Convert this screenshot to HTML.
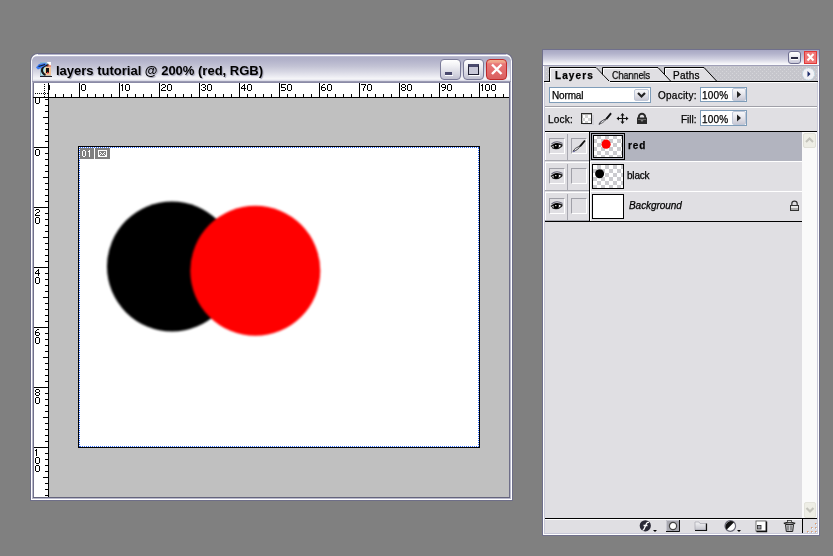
<!DOCTYPE html>
<html><head><meta charset="utf-8"><style>
html,body{margin:0;padding:0;}
body{width:833px;height:556px;background:#808080;position:relative;overflow:hidden;font-family:"Liberation Sans", sans-serif;}
div{box-sizing:border-box;}
svg{position:absolute;overflow:visible;}
.t{position:absolute;color:#000;white-space:nowrap;will-change:transform;-webkit-text-stroke:0.25px #000;}
.clip{position:absolute;overflow:hidden;}
</style></head><body>

<div style="position:absolute;left:30px;top:53px;width:483px;height:448px;background:#6e6e88;border-radius:8px 8px 0 0;"></div>
<div style="position:absolute;left:31px;top:54px;width:481px;height:446px;background:#ffffff;border-radius:7px 7px 0 0;"></div>
<div style="position:absolute;left:32px;top:56px;width:479px;height:26px;background:linear-gradient(#c4c4d8 0px,#b0b0c8 1.5px,#b2b2ca 4px,#c2c2d4 10px,#d8d8e4 16px,#eeeef4 21px,#f6f6f8 23px,#dcdce8 24.5px,#c8c8d8 25px);border-radius:5px 5px 0 0;"></div>
<div style="position:absolute;left:38px;top:54px;width:468px;height:1px;background:#b4b4cc;"></div>
<div style="position:absolute;left:32px;top:60px;width:1px;height:438px;background:#b8b8cc;"></div>
<div style="position:absolute;left:33px;top:82px;width:1px;height:416px;background:#70708a;"></div>
<div style="position:absolute;left:510px;top:60px;width:1px;height:438px;background:#b8b8cc;"></div>
<div style="position:absolute;left:509px;top:82px;width:1px;height:416px;background:#6e6e88;"></div>
<div style="position:absolute;left:32px;top:498px;width:479px;height:1px;background:#b8b8cc;"></div>
<div style="position:absolute;left:33px;top:497px;width:477px;height:1px;background:#64647c;"></div>
<div style="position:absolute;left:32px;top:81px;width:479px;height:1px;background:#9a9ab2;"></div>
<div style="position:absolute;left:33px;top:82px;width:476px;height:1px;background:#8a8aa6;"></div>
<div class="t" style="left:56px;top:63px;font-size:13px;line-height:16px;font-weight:bold;-webkit-text-stroke:0;text-shadow:1px 1px 1px #9c9cb0;">layers tutorial @ 200% (red, RGB)</div>
<svg style="left:34px;top:58px" width="22" height="22" viewBox="0 0 22 22">
<rect x="6" y="4" width="11" height="14" fill="#90b8d0"/>
<rect x="7" y="7" width="6" height="10" fill="#b0eef0"/>
<path d="M12 6 H17 V17.5 H10 Z" fill="#f0c498"/>
<path d="M14.5 7.5 A4.8 4.8 0 1 0 11.5 17" stroke="#141418" stroke-width="2.2" fill="none"/>
<rect x="12" y="10" width="3" height="5" fill="#111"/>
<rect x="13" y="14" width="1.5" height="1.5" fill="#e02828"/>
<path d="M12.5 4 H17 V8 Z" fill="#ffffff"/>
<path d="M13 8 L17 8" stroke="#e04040" stroke-width="0.8"/>
<path d="M2 9.5 L5 6 L11 5 L13 6.5 L9 9 L4 11.5 Z" fill="#3a78f0"/>
<path d="M4.5 8.5 L11 6.5" stroke="#101828" stroke-width="1.2"/>
<rect x="6" y="18" width="12" height="1" fill="#20202c"/>
</svg>
<div style="position:absolute;left:440px;top:59px;width:21px;height:21px;background:linear-gradient(#ffffff,#f0f0f4 30%,#d4d4e0 75%,#c0c0d0);border:1px solid #7a7a98;border-radius:4px;"></div>
<div style="position:absolute;left:463px;top:59px;width:21px;height:21px;background:linear-gradient(#ffffff,#f0f0f4 30%,#d4d4e0 75%,#c0c0d0);border:1px solid #7a7a98;border-radius:4px;"></div>
<div style="position:absolute;left:445px;top:72px;width:7px;height:3px;background:#4a4a6e;"></div>
<div style="position:absolute;left:445px;top:75px;width:8px;height:1px;background:#ffffff;"></div>
<div style="position:absolute;left:468px;top:64px;width:11px;height:11px;background:#c8c8d8;border:1px solid #1e1e30;border-top:3px solid #4a4a6e;"></div>
<div style="position:absolute;left:469px;top:75px;width:11px;height:1px;background:#ffffff;"></div>
<div style="position:absolute;left:486px;top:59px;width:21px;height:21px;background:linear-gradient(#f0b090 0,#f0a088 12%,#e87878 20%,#e06868 70%,#d86060);border:1px solid #c02828;border-radius:4px;"></div>
<svg style="left:486px;top:59px" width="21" height="21"><path d="M6 5.5 L15.5 15 M15.5 5.5 L6 15" stroke="#fff" stroke-width="2.4"/></svg>
<div style="position:absolute;left:33px;top:82px;width:476px;height:1px;background:#8a8aa6;"></div>
<div style="position:absolute;left:34px;top:83px;width:475px;height:14px;background:#ffffff;"></div>
<div style="position:absolute;left:34px;top:98px;width:14px;height:399px;background:#ffffff;"></div>
<div style="position:absolute;left:33px;top:97px;width:476px;height:1px;background:#000;"></div>
<div style="position:absolute;left:48px;top:83px;width:1px;height:414px;background:#000;"></div>
<div style="position:absolute;left:49px;top:98px;width:460px;height:399px;background:#c0c0c0;"></div>
<div style="position:absolute;left:55px;top:94px;width:1px;height:3px;background:#000;"></div>
<div style="position:absolute;left:63px;top:94px;width:1px;height:3px;background:#000;"></div>
<div style="position:absolute;left:71px;top:94px;width:1px;height:3px;background:#000;"></div>
<div style="position:absolute;left:79px;top:83px;width:1px;height:14px;background:#000;"></div>
<div style="position:absolute;left:87px;top:94px;width:1px;height:3px;background:#000;"></div>
<div style="position:absolute;left:95px;top:94px;width:1px;height:3px;background:#000;"></div>
<div style="position:absolute;left:103px;top:94px;width:1px;height:3px;background:#000;"></div>
<div style="position:absolute;left:111px;top:94px;width:1px;height:3px;background:#000;"></div>
<div style="position:absolute;left:119px;top:83px;width:1px;height:14px;background:#000;"></div>
<div style="position:absolute;left:127px;top:94px;width:1px;height:3px;background:#000;"></div>
<div style="position:absolute;left:135px;top:94px;width:1px;height:3px;background:#000;"></div>
<div style="position:absolute;left:143px;top:94px;width:1px;height:3px;background:#000;"></div>
<div style="position:absolute;left:151px;top:94px;width:1px;height:3px;background:#000;"></div>
<div style="position:absolute;left:159px;top:83px;width:1px;height:14px;background:#000;"></div>
<div style="position:absolute;left:167px;top:94px;width:1px;height:3px;background:#000;"></div>
<div style="position:absolute;left:175px;top:94px;width:1px;height:3px;background:#000;"></div>
<div style="position:absolute;left:183px;top:94px;width:1px;height:3px;background:#000;"></div>
<div style="position:absolute;left:191px;top:94px;width:1px;height:3px;background:#000;"></div>
<div style="position:absolute;left:199px;top:83px;width:1px;height:14px;background:#000;"></div>
<div style="position:absolute;left:207px;top:94px;width:1px;height:3px;background:#000;"></div>
<div style="position:absolute;left:215px;top:94px;width:1px;height:3px;background:#000;"></div>
<div style="position:absolute;left:223px;top:94px;width:1px;height:3px;background:#000;"></div>
<div style="position:absolute;left:231px;top:94px;width:1px;height:3px;background:#000;"></div>
<div style="position:absolute;left:239px;top:83px;width:1px;height:14px;background:#000;"></div>
<div style="position:absolute;left:247px;top:94px;width:1px;height:3px;background:#000;"></div>
<div style="position:absolute;left:255px;top:94px;width:1px;height:3px;background:#000;"></div>
<div style="position:absolute;left:263px;top:94px;width:1px;height:3px;background:#000;"></div>
<div style="position:absolute;left:271px;top:94px;width:1px;height:3px;background:#000;"></div>
<div style="position:absolute;left:279px;top:83px;width:1px;height:14px;background:#000;"></div>
<div style="position:absolute;left:287px;top:94px;width:1px;height:3px;background:#000;"></div>
<div style="position:absolute;left:295px;top:94px;width:1px;height:3px;background:#000;"></div>
<div style="position:absolute;left:303px;top:94px;width:1px;height:3px;background:#000;"></div>
<div style="position:absolute;left:311px;top:94px;width:1px;height:3px;background:#000;"></div>
<div style="position:absolute;left:319px;top:83px;width:1px;height:14px;background:#000;"></div>
<div style="position:absolute;left:327px;top:94px;width:1px;height:3px;background:#000;"></div>
<div style="position:absolute;left:335px;top:94px;width:1px;height:3px;background:#000;"></div>
<div style="position:absolute;left:343px;top:94px;width:1px;height:3px;background:#000;"></div>
<div style="position:absolute;left:351px;top:94px;width:1px;height:3px;background:#000;"></div>
<div style="position:absolute;left:359px;top:83px;width:1px;height:14px;background:#000;"></div>
<div style="position:absolute;left:367px;top:94px;width:1px;height:3px;background:#000;"></div>
<div style="position:absolute;left:375px;top:94px;width:1px;height:3px;background:#000;"></div>
<div style="position:absolute;left:383px;top:94px;width:1px;height:3px;background:#000;"></div>
<div style="position:absolute;left:391px;top:94px;width:1px;height:3px;background:#000;"></div>
<div style="position:absolute;left:399px;top:83px;width:1px;height:14px;background:#000;"></div>
<div style="position:absolute;left:407px;top:94px;width:1px;height:3px;background:#000;"></div>
<div style="position:absolute;left:415px;top:94px;width:1px;height:3px;background:#000;"></div>
<div style="position:absolute;left:423px;top:94px;width:1px;height:3px;background:#000;"></div>
<div style="position:absolute;left:431px;top:94px;width:1px;height:3px;background:#000;"></div>
<div style="position:absolute;left:439px;top:83px;width:1px;height:14px;background:#000;"></div>
<div style="position:absolute;left:447px;top:94px;width:1px;height:3px;background:#000;"></div>
<div style="position:absolute;left:455px;top:94px;width:1px;height:3px;background:#000;"></div>
<div style="position:absolute;left:463px;top:94px;width:1px;height:3px;background:#000;"></div>
<div style="position:absolute;left:471px;top:94px;width:1px;height:3px;background:#000;"></div>
<div style="position:absolute;left:479px;top:83px;width:1px;height:14px;background:#000;"></div>
<div style="position:absolute;left:487px;top:94px;width:1px;height:3px;background:#000;"></div>
<div style="position:absolute;left:495px;top:94px;width:1px;height:3px;background:#000;"></div>
<div style="position:absolute;left:503px;top:94px;width:1px;height:3px;background:#000;"></div>
<div style="position:absolute;left:45px;top:99px;width:3px;height:1px;background:#000;"></div>
<div style="position:absolute;left:45px;top:105px;width:3px;height:1px;background:#000;"></div>
<div style="position:absolute;left:45px;top:111px;width:3px;height:1px;background:#000;"></div>
<div style="position:absolute;left:43px;top:117px;width:5px;height:1px;background:#000;"></div>
<div style="position:absolute;left:45px;top:123px;width:3px;height:1px;background:#000;"></div>
<div style="position:absolute;left:45px;top:129px;width:3px;height:1px;background:#000;"></div>
<div style="position:absolute;left:45px;top:135px;width:3px;height:1px;background:#000;"></div>
<div style="position:absolute;left:45px;top:141px;width:3px;height:1px;background:#000;"></div>
<div style="position:absolute;left:34px;top:147px;width:14px;height:1px;background:#000;"></div>
<div style="position:absolute;left:45px;top:153px;width:3px;height:1px;background:#000;"></div>
<div style="position:absolute;left:45px;top:159px;width:3px;height:1px;background:#000;"></div>
<div style="position:absolute;left:45px;top:165px;width:3px;height:1px;background:#000;"></div>
<div style="position:absolute;left:45px;top:171px;width:3px;height:1px;background:#000;"></div>
<div style="position:absolute;left:43px;top:177px;width:5px;height:1px;background:#000;"></div>
<div style="position:absolute;left:45px;top:183px;width:3px;height:1px;background:#000;"></div>
<div style="position:absolute;left:45px;top:189px;width:3px;height:1px;background:#000;"></div>
<div style="position:absolute;left:45px;top:195px;width:3px;height:1px;background:#000;"></div>
<div style="position:absolute;left:45px;top:201px;width:3px;height:1px;background:#000;"></div>
<div style="position:absolute;left:34px;top:207px;width:14px;height:1px;background:#000;"></div>
<div style="position:absolute;left:45px;top:213px;width:3px;height:1px;background:#000;"></div>
<div style="position:absolute;left:45px;top:219px;width:3px;height:1px;background:#000;"></div>
<div style="position:absolute;left:45px;top:225px;width:3px;height:1px;background:#000;"></div>
<div style="position:absolute;left:45px;top:231px;width:3px;height:1px;background:#000;"></div>
<div style="position:absolute;left:43px;top:237px;width:5px;height:1px;background:#000;"></div>
<div style="position:absolute;left:45px;top:243px;width:3px;height:1px;background:#000;"></div>
<div style="position:absolute;left:45px;top:249px;width:3px;height:1px;background:#000;"></div>
<div style="position:absolute;left:45px;top:255px;width:3px;height:1px;background:#000;"></div>
<div style="position:absolute;left:45px;top:261px;width:3px;height:1px;background:#000;"></div>
<div style="position:absolute;left:34px;top:267px;width:14px;height:1px;background:#000;"></div>
<div style="position:absolute;left:45px;top:273px;width:3px;height:1px;background:#000;"></div>
<div style="position:absolute;left:45px;top:279px;width:3px;height:1px;background:#000;"></div>
<div style="position:absolute;left:45px;top:285px;width:3px;height:1px;background:#000;"></div>
<div style="position:absolute;left:45px;top:291px;width:3px;height:1px;background:#000;"></div>
<div style="position:absolute;left:43px;top:297px;width:5px;height:1px;background:#000;"></div>
<div style="position:absolute;left:45px;top:303px;width:3px;height:1px;background:#000;"></div>
<div style="position:absolute;left:45px;top:309px;width:3px;height:1px;background:#000;"></div>
<div style="position:absolute;left:45px;top:315px;width:3px;height:1px;background:#000;"></div>
<div style="position:absolute;left:45px;top:321px;width:3px;height:1px;background:#000;"></div>
<div style="position:absolute;left:34px;top:327px;width:14px;height:1px;background:#000;"></div>
<div style="position:absolute;left:45px;top:333px;width:3px;height:1px;background:#000;"></div>
<div style="position:absolute;left:45px;top:339px;width:3px;height:1px;background:#000;"></div>
<div style="position:absolute;left:45px;top:345px;width:3px;height:1px;background:#000;"></div>
<div style="position:absolute;left:45px;top:351px;width:3px;height:1px;background:#000;"></div>
<div style="position:absolute;left:43px;top:357px;width:5px;height:1px;background:#000;"></div>
<div style="position:absolute;left:45px;top:363px;width:3px;height:1px;background:#000;"></div>
<div style="position:absolute;left:45px;top:369px;width:3px;height:1px;background:#000;"></div>
<div style="position:absolute;left:45px;top:375px;width:3px;height:1px;background:#000;"></div>
<div style="position:absolute;left:45px;top:381px;width:3px;height:1px;background:#000;"></div>
<div style="position:absolute;left:34px;top:387px;width:14px;height:1px;background:#000;"></div>
<div style="position:absolute;left:45px;top:393px;width:3px;height:1px;background:#000;"></div>
<div style="position:absolute;left:45px;top:399px;width:3px;height:1px;background:#000;"></div>
<div style="position:absolute;left:45px;top:405px;width:3px;height:1px;background:#000;"></div>
<div style="position:absolute;left:45px;top:411px;width:3px;height:1px;background:#000;"></div>
<div style="position:absolute;left:43px;top:417px;width:5px;height:1px;background:#000;"></div>
<div style="position:absolute;left:45px;top:423px;width:3px;height:1px;background:#000;"></div>
<div style="position:absolute;left:45px;top:429px;width:3px;height:1px;background:#000;"></div>
<div style="position:absolute;left:45px;top:435px;width:3px;height:1px;background:#000;"></div>
<div style="position:absolute;left:45px;top:441px;width:3px;height:1px;background:#000;"></div>
<div style="position:absolute;left:34px;top:447px;width:14px;height:1px;background:#000;"></div>
<div style="position:absolute;left:45px;top:453px;width:3px;height:1px;background:#000;"></div>
<div style="position:absolute;left:45px;top:459px;width:3px;height:1px;background:#000;"></div>
<div style="position:absolute;left:45px;top:465px;width:3px;height:1px;background:#000;"></div>
<div style="position:absolute;left:45px;top:471px;width:3px;height:1px;background:#000;"></div>
<div style="position:absolute;left:43px;top:477px;width:5px;height:1px;background:#000;"></div>
<div style="position:absolute;left:45px;top:483px;width:3px;height:1px;background:#000;"></div>
<div style="position:absolute;left:45px;top:489px;width:3px;height:1px;background:#000;"></div>
<div style="position:absolute;left:45px;top:495px;width:3px;height:1px;background:#000;"></div>
<svg style="left:0;top:0" width="833" height="556" shape-rendering="crispEdges"><path fill="#000" d="M49 85h1v1h-1zM49 86h1v1h-1zM49 87h1v1h-1zM49 88h1v1h-1zM49 89h1v1h-1zM82 84h1v1h-1zM83 84h1v1h-1zM84 84h1v1h-1zM81 85h1v1h-1zM85 85h1v1h-1zM81 86h1v1h-1zM85 86h1v1h-1zM81 87h1v1h-1zM85 87h1v1h-1zM81 88h1v1h-1zM85 88h1v1h-1zM81 89h1v1h-1zM85 89h1v1h-1zM82 90h1v1h-1zM83 90h1v1h-1zM84 90h1v1h-1zM122 84h1v1h-1zM121 85h1v1h-1zM122 85h1v1h-1zM122 86h1v1h-1zM122 87h1v1h-1zM122 88h1v1h-1zM122 89h1v1h-1zM122 90h1v1h-1zM126 84h1v1h-1zM127 84h1v1h-1zM128 84h1v1h-1zM125 85h1v1h-1zM129 85h1v1h-1zM125 86h1v1h-1zM129 86h1v1h-1zM125 87h1v1h-1zM129 87h1v1h-1zM125 88h1v1h-1zM129 88h1v1h-1zM125 89h1v1h-1zM129 89h1v1h-1zM126 90h1v1h-1zM127 90h1v1h-1zM128 90h1v1h-1zM162 84h1v1h-1zM163 84h1v1h-1zM164 84h1v1h-1zM161 85h1v1h-1zM165 85h1v1h-1zM165 86h1v1h-1zM163 87h1v1h-1zM164 87h1v1h-1zM162 88h1v1h-1zM161 89h1v1h-1zM161 90h1v1h-1zM162 90h1v1h-1zM163 90h1v1h-1zM164 90h1v1h-1zM165 90h1v1h-1zM168 84h1v1h-1zM169 84h1v1h-1zM170 84h1v1h-1zM167 85h1v1h-1zM171 85h1v1h-1zM167 86h1v1h-1zM171 86h1v1h-1zM167 87h1v1h-1zM171 87h1v1h-1zM167 88h1v1h-1zM171 88h1v1h-1zM167 89h1v1h-1zM171 89h1v1h-1zM168 90h1v1h-1zM169 90h1v1h-1zM170 90h1v1h-1zM202 84h1v1h-1zM203 84h1v1h-1zM204 84h1v1h-1zM201 85h1v1h-1zM205 85h1v1h-1zM205 86h1v1h-1zM203 87h1v1h-1zM204 87h1v1h-1zM205 88h1v1h-1zM201 89h1v1h-1zM205 89h1v1h-1zM202 90h1v1h-1zM203 90h1v1h-1zM204 90h1v1h-1zM208 84h1v1h-1zM209 84h1v1h-1zM210 84h1v1h-1zM207 85h1v1h-1zM211 85h1v1h-1zM207 86h1v1h-1zM211 86h1v1h-1zM207 87h1v1h-1zM211 87h1v1h-1zM207 88h1v1h-1zM211 88h1v1h-1zM207 89h1v1h-1zM211 89h1v1h-1zM208 90h1v1h-1zM209 90h1v1h-1zM210 90h1v1h-1zM244 84h1v1h-1zM243 85h1v1h-1zM244 85h1v1h-1zM242 86h1v1h-1zM244 86h1v1h-1zM241 87h1v1h-1zM244 87h1v1h-1zM241 88h1v1h-1zM242 88h1v1h-1zM243 88h1v1h-1zM244 88h1v1h-1zM245 88h1v1h-1zM244 89h1v1h-1zM244 90h1v1h-1zM248 84h1v1h-1zM249 84h1v1h-1zM250 84h1v1h-1zM247 85h1v1h-1zM251 85h1v1h-1zM247 86h1v1h-1zM251 86h1v1h-1zM247 87h1v1h-1zM251 87h1v1h-1zM247 88h1v1h-1zM251 88h1v1h-1zM247 89h1v1h-1zM251 89h1v1h-1zM248 90h1v1h-1zM249 90h1v1h-1zM250 90h1v1h-1zM281 84h1v1h-1zM282 84h1v1h-1zM283 84h1v1h-1zM284 84h1v1h-1zM285 84h1v1h-1zM281 85h1v1h-1zM281 86h1v1h-1zM281 87h1v1h-1zM282 87h1v1h-1zM283 87h1v1h-1zM284 87h1v1h-1zM285 88h1v1h-1zM285 89h1v1h-1zM281 90h1v1h-1zM282 90h1v1h-1zM283 90h1v1h-1zM284 90h1v1h-1zM288 84h1v1h-1zM289 84h1v1h-1zM290 84h1v1h-1zM287 85h1v1h-1zM291 85h1v1h-1zM287 86h1v1h-1zM291 86h1v1h-1zM287 87h1v1h-1zM291 87h1v1h-1zM287 88h1v1h-1zM291 88h1v1h-1zM287 89h1v1h-1zM291 89h1v1h-1zM288 90h1v1h-1zM289 90h1v1h-1zM290 90h1v1h-1zM323 84h1v1h-1zM324 84h1v1h-1zM322 85h1v1h-1zM321 86h1v1h-1zM321 87h1v1h-1zM322 87h1v1h-1zM323 87h1v1h-1zM324 87h1v1h-1zM321 88h1v1h-1zM325 88h1v1h-1zM321 89h1v1h-1zM325 89h1v1h-1zM322 90h1v1h-1zM323 90h1v1h-1zM324 90h1v1h-1zM328 84h1v1h-1zM329 84h1v1h-1zM330 84h1v1h-1zM327 85h1v1h-1zM331 85h1v1h-1zM327 86h1v1h-1zM331 86h1v1h-1zM327 87h1v1h-1zM331 87h1v1h-1zM327 88h1v1h-1zM331 88h1v1h-1zM327 89h1v1h-1zM331 89h1v1h-1zM328 90h1v1h-1zM329 90h1v1h-1zM330 90h1v1h-1zM361 84h1v1h-1zM362 84h1v1h-1zM363 84h1v1h-1zM364 84h1v1h-1zM365 84h1v1h-1zM365 85h1v1h-1zM364 86h1v1h-1zM364 87h1v1h-1zM363 88h1v1h-1zM363 89h1v1h-1zM363 90h1v1h-1zM368 84h1v1h-1zM369 84h1v1h-1zM370 84h1v1h-1zM367 85h1v1h-1zM371 85h1v1h-1zM367 86h1v1h-1zM371 86h1v1h-1zM367 87h1v1h-1zM371 87h1v1h-1zM367 88h1v1h-1zM371 88h1v1h-1zM367 89h1v1h-1zM371 89h1v1h-1zM368 90h1v1h-1zM369 90h1v1h-1zM370 90h1v1h-1zM402 84h1v1h-1zM403 84h1v1h-1zM404 84h1v1h-1zM401 85h1v1h-1zM405 85h1v1h-1zM401 86h1v1h-1zM405 86h1v1h-1zM402 87h1v1h-1zM403 87h1v1h-1zM404 87h1v1h-1zM401 88h1v1h-1zM405 88h1v1h-1zM401 89h1v1h-1zM405 89h1v1h-1zM402 90h1v1h-1zM403 90h1v1h-1zM404 90h1v1h-1zM408 84h1v1h-1zM409 84h1v1h-1zM410 84h1v1h-1zM407 85h1v1h-1zM411 85h1v1h-1zM407 86h1v1h-1zM411 86h1v1h-1zM407 87h1v1h-1zM411 87h1v1h-1zM407 88h1v1h-1zM411 88h1v1h-1zM407 89h1v1h-1zM411 89h1v1h-1zM408 90h1v1h-1zM409 90h1v1h-1zM410 90h1v1h-1zM442 84h1v1h-1zM443 84h1v1h-1zM444 84h1v1h-1zM441 85h1v1h-1zM445 85h1v1h-1zM441 86h1v1h-1zM445 86h1v1h-1zM442 87h1v1h-1zM443 87h1v1h-1zM444 87h1v1h-1zM445 87h1v1h-1zM445 88h1v1h-1zM444 89h1v1h-1zM442 90h1v1h-1zM443 90h1v1h-1zM448 84h1v1h-1zM449 84h1v1h-1zM450 84h1v1h-1zM447 85h1v1h-1zM451 85h1v1h-1zM447 86h1v1h-1zM451 86h1v1h-1zM447 87h1v1h-1zM451 87h1v1h-1zM447 88h1v1h-1zM451 88h1v1h-1zM447 89h1v1h-1zM451 89h1v1h-1zM448 90h1v1h-1zM449 90h1v1h-1zM450 90h1v1h-1zM482 84h1v1h-1zM481 85h1v1h-1zM482 85h1v1h-1zM482 86h1v1h-1zM482 87h1v1h-1zM482 88h1v1h-1zM482 89h1v1h-1zM482 90h1v1h-1zM486 84h1v1h-1zM487 84h1v1h-1zM488 84h1v1h-1zM485 85h1v1h-1zM489 85h1v1h-1zM485 86h1v1h-1zM489 86h1v1h-1zM485 87h1v1h-1zM489 87h1v1h-1zM485 88h1v1h-1zM489 88h1v1h-1zM485 89h1v1h-1zM489 89h1v1h-1zM486 90h1v1h-1zM487 90h1v1h-1zM488 90h1v1h-1zM492 84h1v1h-1zM493 84h1v1h-1zM494 84h1v1h-1zM491 85h1v1h-1zM495 85h1v1h-1zM491 86h1v1h-1zM495 86h1v1h-1zM491 87h1v1h-1zM495 87h1v1h-1zM491 88h1v1h-1zM495 88h1v1h-1zM491 89h1v1h-1zM495 89h1v1h-1zM492 90h1v1h-1zM493 90h1v1h-1zM494 90h1v1h-1zM35 98h1v1h-1zM39 98h1v1h-1zM35 99h1v1h-1zM39 99h1v1h-1zM35 100h1v1h-1zM39 100h1v1h-1zM35 101h1v1h-1zM39 101h1v1h-1zM35 102h1v1h-1zM39 102h1v1h-1zM36 103h1v1h-1zM37 103h1v1h-1zM38 103h1v1h-1zM36 149h1v1h-1zM37 149h1v1h-1zM38 149h1v1h-1zM35 150h1v1h-1zM39 150h1v1h-1zM35 151h1v1h-1zM39 151h1v1h-1zM35 152h1v1h-1zM39 152h1v1h-1zM35 153h1v1h-1zM39 153h1v1h-1zM35 154h1v1h-1zM39 154h1v1h-1zM36 155h1v1h-1zM37 155h1v1h-1zM38 155h1v1h-1zM36 209h1v1h-1zM37 209h1v1h-1zM38 209h1v1h-1zM35 210h1v1h-1zM39 210h1v1h-1zM39 211h1v1h-1zM37 212h1v1h-1zM38 212h1v1h-1zM36 213h1v1h-1zM35 214h1v1h-1zM35 215h1v1h-1zM36 215h1v1h-1zM37 215h1v1h-1zM38 215h1v1h-1zM39 215h1v1h-1zM36 217h1v1h-1zM37 217h1v1h-1zM38 217h1v1h-1zM35 218h1v1h-1zM39 218h1v1h-1zM35 219h1v1h-1zM39 219h1v1h-1zM35 220h1v1h-1zM39 220h1v1h-1zM35 221h1v1h-1zM39 221h1v1h-1zM35 222h1v1h-1zM39 222h1v1h-1zM36 223h1v1h-1zM37 223h1v1h-1zM38 223h1v1h-1zM38 269h1v1h-1zM37 270h1v1h-1zM38 270h1v1h-1zM36 271h1v1h-1zM38 271h1v1h-1zM35 272h1v1h-1zM38 272h1v1h-1zM35 273h1v1h-1zM36 273h1v1h-1zM37 273h1v1h-1zM38 273h1v1h-1zM39 273h1v1h-1zM38 274h1v1h-1zM38 275h1v1h-1zM36 277h1v1h-1zM37 277h1v1h-1zM38 277h1v1h-1zM35 278h1v1h-1zM39 278h1v1h-1zM35 279h1v1h-1zM39 279h1v1h-1zM35 280h1v1h-1zM39 280h1v1h-1zM35 281h1v1h-1zM39 281h1v1h-1zM35 282h1v1h-1zM39 282h1v1h-1zM36 283h1v1h-1zM37 283h1v1h-1zM38 283h1v1h-1zM37 329h1v1h-1zM38 329h1v1h-1zM36 330h1v1h-1zM35 331h1v1h-1zM35 332h1v1h-1zM36 332h1v1h-1zM37 332h1v1h-1zM38 332h1v1h-1zM35 333h1v1h-1zM39 333h1v1h-1zM35 334h1v1h-1zM39 334h1v1h-1zM36 335h1v1h-1zM37 335h1v1h-1zM38 335h1v1h-1zM36 337h1v1h-1zM37 337h1v1h-1zM38 337h1v1h-1zM35 338h1v1h-1zM39 338h1v1h-1zM35 339h1v1h-1zM39 339h1v1h-1zM35 340h1v1h-1zM39 340h1v1h-1zM35 341h1v1h-1zM39 341h1v1h-1zM35 342h1v1h-1zM39 342h1v1h-1zM36 343h1v1h-1zM37 343h1v1h-1zM38 343h1v1h-1zM36 389h1v1h-1zM37 389h1v1h-1zM38 389h1v1h-1zM35 390h1v1h-1zM39 390h1v1h-1zM35 391h1v1h-1zM39 391h1v1h-1zM36 392h1v1h-1zM37 392h1v1h-1zM38 392h1v1h-1zM35 393h1v1h-1zM39 393h1v1h-1zM35 394h1v1h-1zM39 394h1v1h-1zM36 395h1v1h-1zM37 395h1v1h-1zM38 395h1v1h-1zM36 397h1v1h-1zM37 397h1v1h-1zM38 397h1v1h-1zM35 398h1v1h-1zM39 398h1v1h-1zM35 399h1v1h-1zM39 399h1v1h-1zM35 400h1v1h-1zM39 400h1v1h-1zM35 401h1v1h-1zM39 401h1v1h-1zM35 402h1v1h-1zM39 402h1v1h-1zM36 403h1v1h-1zM37 403h1v1h-1zM38 403h1v1h-1zM36 449h1v1h-1zM35 450h1v1h-1zM36 450h1v1h-1zM36 451h1v1h-1zM36 452h1v1h-1zM36 453h1v1h-1zM36 454h1v1h-1zM36 455h1v1h-1zM36 457h1v1h-1zM37 457h1v1h-1zM38 457h1v1h-1zM35 458h1v1h-1zM39 458h1v1h-1zM35 459h1v1h-1zM39 459h1v1h-1zM35 460h1v1h-1zM39 460h1v1h-1zM35 461h1v1h-1zM39 461h1v1h-1zM35 462h1v1h-1zM39 462h1v1h-1zM36 463h1v1h-1zM37 463h1v1h-1zM38 463h1v1h-1zM36 465h1v1h-1zM37 465h1v1h-1zM38 465h1v1h-1zM35 466h1v1h-1zM39 466h1v1h-1zM35 467h1v1h-1zM39 467h1v1h-1zM35 468h1v1h-1zM39 468h1v1h-1zM35 469h1v1h-1zM39 469h1v1h-1zM35 470h1v1h-1zM39 470h1v1h-1zM36 471h1v1h-1zM37 471h1v1h-1zM38 471h1v1h-1z"/></svg>
<svg style="left:0;top:0" width="833" height="556"><g fill="#000"><rect x="44" y="84" width="1" height="1"/><rect x="44" y="86" width="1" height="1"/><rect x="44" y="88" width="1" height="1"/><rect x="44" y="90" width="1" height="1"/><rect x="44" y="92" width="1" height="1"/><rect x="44" y="94" width="1" height="1"/><rect x="35" y="93" width="1" height="1"/><rect x="37" y="93" width="1" height="1"/><rect x="39" y="93" width="1" height="1"/><rect x="41" y="93" width="1" height="1"/><rect x="43" y="93" width="1" height="1"/><rect x="45" y="93" width="1" height="1"/><rect x="47" y="93" width="1" height="1"/><rect x="44" y="96" width="1" height="1"/></g></svg>
<div style="position:absolute;left:78px;top:146px;width:402px;height:302px;background:#000;"></div>
<div class="clip" style="left:79px;top:147px;width:400px;height:300px;background:#fff;">
<svg style="left:0;top:0" width="400" height="300">
<defs><filter id="bl" x="-20%" y="-20%" width="140%" height="140%"><feGaussianBlur stdDeviation="0.8"/></filter></defs>
<circle cx="93" cy="119.5" r="65" fill="#000" filter="url(#bl)"/>
<circle cx="176.3" cy="123.8" r="65" fill="#f00" filter="url(#bl)"/>
<path d="M0.5 0 V300 M399.5 0 V300 M0 0.5 H400 M0 299.5 H400" stroke="#2f6cff" stroke-width="1" stroke-dasharray="1 1" stroke-dashoffset="1"/>
</svg>
<div style="position:absolute;left:1px;top:1px;width:14px;height:11px;background:#808080;"></div>
<div style="position:absolute;left:16px;top:1px;width:15px;height:11px;background:#808080;"></div>
<svg style="left:0;top:0" width="40" height="14" shape-rendering="crispEdges"><path fill="#fff" d="M4 3h1v1h-1zM5 3h1v1h-1zM3 4h1v1h-1zM6 4h1v1h-1zM3 5h1v1h-1zM6 5h1v1h-1zM3 6h1v1h-1zM6 6h1v1h-1zM3 7h1v1h-1zM6 7h1v1h-1zM3 8h1v1h-1zM6 8h1v1h-1zM4 9h1v1h-1zM5 9h1v1h-1zM10 3h1v1h-1zM9 4h1v1h-1zM10 4h1v1h-1zM10 5h1v1h-1zM10 6h1v1h-1zM10 7h1v1h-1zM10 8h1v1h-1zM10 9h1v1h-1zM19 3h1v1h-1zM20 3h1v1h-1zM21 3h1v1h-1zM22 3h1v1h-1zM23 3h1v1h-1zM24 3h1v1h-1zM25 3h1v1h-1zM26 3h1v1h-1zM27 3h1v1h-1zM19 4h1v1h-1zM27 4h1v1h-1zM19 5h1v1h-1zM21 5h1v1h-1zM25 5h1v1h-1zM27 5h1v1h-1zM19 6h1v1h-1zM22 6h1v1h-1zM24 6h1v1h-1zM27 6h1v1h-1zM19 7h1v1h-1zM21 7h1v1h-1zM23 7h1v1h-1zM25 7h1v1h-1zM27 7h1v1h-1zM19 8h1v1h-1zM20 8h1v1h-1zM26 8h1v1h-1zM27 8h1v1h-1zM19 9h1v1h-1zM20 9h1v1h-1zM21 9h1v1h-1zM22 9h1v1h-1zM23 9h1v1h-1zM24 9h1v1h-1zM25 9h1v1h-1zM26 9h1v1h-1zM27 9h1v1h-1z"/></svg>
</div>
<div style="position:absolute;left:542px;top:49px;width:278px;height:487px;background:#70708c;"></div>
<div style="position:absolute;left:543px;top:50px;width:276px;height:485px;background:#ffffff;"></div>
<div style="position:absolute;left:544px;top:51px;width:274px;height:483px;background:#c8c8d8;"></div>
<div style="position:absolute;left:545px;top:52px;width:272px;height:481px;background:#e0dfe3;"></div>
<div style="position:absolute;left:817px;top:51px;width:1px;height:483px;background:#c8c8d8;"></div>
<div style="position:absolute;left:818px;top:50px;width:1px;height:485px;background:#ffffff;"></div>
<div style="position:absolute;left:543px;top:50px;width:276px;height:15px;background:linear-gradient(#a8a8c4,#b4b4cc 25%,#d0d0e0 60%,#f4f4f8 90%,#fcfcfe);"></div>
<div style="position:absolute;left:543px;top:65px;width:276px;height:1px;background:#a0a0b8;"></div>
<div style="position:absolute;left:545px;top:66px;width:272px;height:16px;background:#c6c6cc;"></div>
<svg style="left:545px;top:66px" width="272" height="15" shape-rendering="crispEdges"><defs><pattern id="dt" width="4" height="4" patternUnits="userSpaceOnUse"><rect x="1" y="1" width="1" height="1" fill="#d6d6da"/><rect x="3" y="3" width="1" height="1" fill="#d6d6da"/></pattern></defs><rect width="272" height="15" fill="url(#dt)"/></svg>
<div style="position:absolute;left:545px;top:81px;width:272px;height:1px;background:#000;"></div>
<div style="position:absolute;left:545px;top:82px;width:272px;height:1px;background:#ffffff;"></div>
<div style="position:absolute;left:788px;top:51px;width:13px;height:13px;background:linear-gradient(#ffffff,#e8e8f0 50%,#c8c8d8);border:1px solid #6e6e90;border-radius:3px;"></div>
<div style="position:absolute;left:791px;top:57px;width:7px;height:2px;background:#2a2a44;"></div>
<div style="position:absolute;left:791px;top:59px;width:7px;height:1px;background:#fff;"></div>
<div style="position:absolute;left:804px;top:51px;width:13px;height:13px;background:#f07878;border:1px solid #e03838;"></div>
<svg style="left:804px;top:51px" width="13" height="13"><path d="M3.5 3 L9.5 9.5 M9.5 3 L3.5 9.5" stroke="#fff" stroke-width="2"/></svg>
<svg style="left:801px;top:67px" width="15" height="14"><circle cx="7.5" cy="7" r="6" fill="#f2f2f6" stroke="#b8d8e8" stroke-dasharray="1 1"/><path d="M6.5 4 L9.5 7 L6.5 10z" fill="#1a2a6a"/></svg>
<svg style="left:544px;top:66px" width="274" height="17">
<path d="M120.5 15.5 V1.5 H160 L173 15.5" fill="#e0dfe3" stroke="#000"/>
<path d="M121.5 15 V2.5 H159" stroke="#fff" fill="none"/>
<path d="M58.5 15.5 V1.5 H114 L127 15.5" fill="#e0dfe3" stroke="#000"/>
<path d="M59.5 15 V2.5 H113" stroke="#fff" fill="none"/>
<path d="M0 15.5 H5.5 V1.5 H52 L65.5 15.5 H274" fill="none" stroke="#000"/>
<path d="M6 16 V2 H52 L65 16z" fill="#e0dfe3"/>
<path d="M6.5 16 V2.5 H51.5" stroke="#fff" fill="none"/>
<path d="M6 16 H66" stroke="#e0dfe3" stroke-width="2"/>
</svg>
<div class="t" style="left:555px;top:71px;font-size:10px;line-height:10px;font-weight:bold;letter-spacing:1.1px;">Layers</div>
<div class="t" style="left:612px;top:71px;font-size:10px;line-height:10px;transform:scaleX(0.9);transform-origin:0 0;">Channels</div>
<div class="t" style="left:673px;top:71px;font-size:10px;line-height:10px;letter-spacing:0.25px;">Paths</div>
<div style="position:absolute;left:549px;top:87px;width:102px;height:16px;background:#fff;border:1px solid #7f9db9;"></div>
<div class="t" style="left:552px;top:91px;font-size:10px;line-height:10px;letter-spacing:-0.15px;">Normal</div>
<div style="position:absolute;left:634px;top:89px;width:15px;height:12px;background:linear-gradient(#f8f8fa,#e4e4ea 50%,#c8c8d4);border:1px solid #c0c8d8;border-radius:2px;"></div>
<svg style="left:634px;top:89px" width="15" height="12"><path d="M4 4 L7.5 7.5 L11 4" stroke="#222" stroke-width="2.2" fill="none"/></svg>
<div class="t" style="left:658px;top:91px;font-size:10px;line-height:10px;letter-spacing:0.25px;">Opacity:</div>
<div style="position:absolute;left:700px;top:87px;width:47px;height:15px;background:#fff;border:1px solid #7f9db9;"></div>
<div class="t" style="left:702px;top:91px;font-size:10px;line-height:10px;letter-spacing:0.2px;">100%</div>
<div style="position:absolute;left:732px;top:88px;width:14px;height:13px;background:linear-gradient(#f8f8fa,#e4e4ea 50%,#c8c8d4);border:1px solid #c0c8d8;border-radius:2px;"></div>
<svg style="left:732px;top:88px" width="14" height="13"><path d="M5 3 L9 6.5 L5 10z" fill="#222"/></svg>
<div style="position:absolute;left:545px;top:106px;width:272px;height:1px;background:#a0a0a8;"></div>
<div style="position:absolute;left:545px;top:107px;width:272px;height:1px;background:#ffffff;"></div>
<div class="t" style="left:548px;top:115px;font-size:10px;line-height:10px;letter-spacing:0.2px;">Lock:</div>
<div class="t" style="left:681px;top:115px;font-size:10px;line-height:10px;">Fill:</div>
<div style="position:absolute;left:700px;top:110px;width:47px;height:16px;background:#fff;border:1px solid #7f9db9;"></div>
<div class="t" style="left:702px;top:115px;font-size:10px;line-height:10px;letter-spacing:0.2px;">100%</div>
<div style="position:absolute;left:732px;top:111px;width:14px;height:14px;background:linear-gradient(#f8f8fa,#e4e4ea 50%,#c8c8d4);border:1px solid #c0c8d8;border-radius:2px;"></div>
<svg style="left:732px;top:111px" width="14" height="14"><path d="M5 3.5 L9 7 L5 10.5z" fill="#222"/></svg>
<svg style="left:578px;top:110px" width="72" height="16">
<rect x="5" y="5" width="11" height="10" fill="#c8c8d0" opacity="0.6"/>
<rect x="3.5" y="3.5" width="10" height="10" fill="#fff" stroke="#2a2a2a"/>
<rect x="4" y="4" width="9" height="1" fill="#b0b0b0"/><rect x="4" y="4" width="1" height="9" fill="#b0b0b0"/>
<rect x="7" y="5" width="3" height="3" fill="#d4d4d4"/><rect x="4" y="8" width="3" height="3" fill="#d4d4d4"/><rect x="10" y="8" width="3" height="3" fill="#d4d4d4"/><rect x="7" y="11" width="3" height="2" fill="#d4d4d4"/>
<path d="M21 14.5 C22 12 24.5 10.5 26 10 L28 9 L33 3" stroke="#2a2a3a" stroke-width="1.3" fill="none"/>
<path d="M21.5 14 C23.5 13.5 26 12 28 9.5 L25.5 10 C23.5 11 22 12.5 21.5 14z" fill="#e8e8f0" stroke="#444" stroke-width="0.8"/>
<path d="M28.5 9 L33 3.5" stroke="#111" stroke-width="1.8"/>
<path d="M44.5 4 V13 M39.5 8.5 H49.5" stroke="#111" stroke-width="1.2"/>
<path d="M42.5 5.5 L44.5 3 L46.5 5.5z M42.5 11.5 L44.5 14 L46.5 11.5z M41 6.5 L38.5 8.5 L41 10.5z M48 6.5 L50.5 8.5 L48 10.5z" fill="#111"/>
<path d="M60.8 8 V7 a3.2 3.2 0 0 1 6.4 0 V8" stroke="#2a2a2a" stroke-width="1.9" fill="none"/>
<rect x="59" y="7.5" width="10" height="6.5" fill="#2a2a2a"/>
<rect x="60" y="9" width="8" height="1" fill="#666"/>
<path d="M62.5 10 h3 l-1.5 2z" fill="#888"/>
</svg>
<div style="position:absolute;left:545px;top:131px;width:272px;height:1px;background:#000;"></div>
<div style="position:absolute;left:545px;top:132px;width:44px;height:30px;background:#e0dfe3;"></div>
<div style="position:absolute;left:545px;top:132px;width:44px;height:1px;background:#ffffff;"></div>
<div style="position:absolute;left:545px;top:132px;width:1px;height:29px;background:#ffffff;"></div>
<div style="position:absolute;left:545px;top:160px;width:44px;height:1px;background:#a8a8b0;"></div>
<div style="position:absolute;left:567px;top:134px;width:1px;height:27px;background:#a8a8b0;"></div>
<div style="position:absolute;left:549px;top:138px;width:16px;height:16px;background:transparent;border-top:1px solid #a0a0a8;border-left:1px solid #a0a0a8;border-bottom:1px solid #fff;border-right:1px solid #fff;"></div>
<div style="position:absolute;left:571px;top:138px;width:16px;height:16px;background:transparent;border-top:1px solid #a0a0a8;border-left:1px solid #a0a0a8;border-bottom:1px solid #fff;border-right:1px solid #fff;"></div>
<svg style="left:549px;top:138px" width="16" height="16">
<path d="M2.5 6 Q7.5 1.8 13.5 5.5" stroke="#6a6a7a" stroke-width="1.1" fill="none"/>
<path d="M2 8.5 Q7.5 3.5 13.5 7.5 Q8.5 12.8 2.5 9z" fill="#fff"/>
<path d="M2 8.5 Q7.5 3.8 13.5 7.5" stroke="#111" stroke-width="1.6" fill="none"/>
<path d="M3 9.5 Q8 12.5 13 8" stroke="#222" stroke-width="1.2" fill="none"/>
<circle cx="7.2" cy="8" r="2.7" fill="#000"/><rect x="6.2" y="7" width="1.2" height="1.2" fill="#fff"/>
</svg>
<div style="position:absolute;left:590px;top:132px;width:212px;height:30px;background:#b2b4bf;"></div>
<div style="position:absolute;left:590px;top:161px;width:212px;height:1px;background:#ffffff;"></div>
<div style="position:absolute;left:545px;top:162px;width:44px;height:30px;background:#e0dfe3;"></div>
<div style="position:absolute;left:545px;top:162px;width:44px;height:1px;background:#ffffff;"></div>
<div style="position:absolute;left:545px;top:162px;width:1px;height:29px;background:#ffffff;"></div>
<div style="position:absolute;left:545px;top:190px;width:44px;height:1px;background:#a8a8b0;"></div>
<div style="position:absolute;left:567px;top:164px;width:1px;height:27px;background:#a8a8b0;"></div>
<div style="position:absolute;left:549px;top:168px;width:16px;height:16px;background:transparent;border-top:1px solid #a0a0a8;border-left:1px solid #a0a0a8;border-bottom:1px solid #fff;border-right:1px solid #fff;"></div>
<div style="position:absolute;left:571px;top:168px;width:16px;height:16px;background:transparent;border-top:1px solid #a0a0a8;border-left:1px solid #a0a0a8;border-bottom:1px solid #fff;border-right:1px solid #fff;"></div>
<svg style="left:549px;top:168px" width="16" height="16">
<path d="M2.5 6 Q7.5 1.8 13.5 5.5" stroke="#6a6a7a" stroke-width="1.1" fill="none"/>
<path d="M2 8.5 Q7.5 3.5 13.5 7.5 Q8.5 12.8 2.5 9z" fill="#fff"/>
<path d="M2 8.5 Q7.5 3.8 13.5 7.5" stroke="#111" stroke-width="1.6" fill="none"/>
<path d="M3 9.5 Q8 12.5 13 8" stroke="#222" stroke-width="1.2" fill="none"/>
<circle cx="7.2" cy="8" r="2.7" fill="#000"/><rect x="6.2" y="7" width="1.2" height="1.2" fill="#fff"/>
</svg>
<div style="position:absolute;left:590px;top:162px;width:212px;height:30px;background:#e0dfe3;"></div>
<div style="position:absolute;left:590px;top:162px;width:1px;height:29px;background:#ffffff;"></div>
<div style="position:absolute;left:590px;top:191px;width:212px;height:1px;background:#ffffff;"></div>
<div style="position:absolute;left:545px;top:192px;width:44px;height:30px;background:#e0dfe3;"></div>
<div style="position:absolute;left:545px;top:192px;width:44px;height:1px;background:#ffffff;"></div>
<div style="position:absolute;left:545px;top:192px;width:1px;height:29px;background:#ffffff;"></div>
<div style="position:absolute;left:545px;top:220px;width:44px;height:1px;background:#a8a8b0;"></div>
<div style="position:absolute;left:567px;top:194px;width:1px;height:27px;background:#a8a8b0;"></div>
<div style="position:absolute;left:549px;top:198px;width:16px;height:16px;background:transparent;border-top:1px solid #a0a0a8;border-left:1px solid #a0a0a8;border-bottom:1px solid #fff;border-right:1px solid #fff;"></div>
<div style="position:absolute;left:571px;top:198px;width:16px;height:16px;background:transparent;border-top:1px solid #a0a0a8;border-left:1px solid #a0a0a8;border-bottom:1px solid #fff;border-right:1px solid #fff;"></div>
<svg style="left:549px;top:198px" width="16" height="16">
<path d="M2.5 6 Q7.5 1.8 13.5 5.5" stroke="#6a6a7a" stroke-width="1.1" fill="none"/>
<path d="M2 8.5 Q7.5 3.5 13.5 7.5 Q8.5 12.8 2.5 9z" fill="#fff"/>
<path d="M2 8.5 Q7.5 3.8 13.5 7.5" stroke="#111" stroke-width="1.6" fill="none"/>
<path d="M3 9.5 Q8 12.5 13 8" stroke="#222" stroke-width="1.2" fill="none"/>
<circle cx="7.2" cy="8" r="2.7" fill="#000"/><rect x="6.2" y="7" width="1.2" height="1.2" fill="#fff"/>
</svg>
<div style="position:absolute;left:590px;top:192px;width:212px;height:30px;background:#e0dfe3;"></div>
<div style="position:absolute;left:590px;top:192px;width:1px;height:29px;background:#ffffff;"></div>
<div style="position:absolute;left:590px;top:221px;width:212px;height:1px;background:#ffffff;"></div>
<div style="position:absolute;left:589px;top:131px;width:1px;height:90px;background:#000;"></div>
<div style="position:absolute;left:545px;top:221px;width:257px;height:1px;background:#000;"></div>
<svg style="left:571px;top:138px" width="16" height="16">
<path d="M2 13.5 C3 11 5.5 9.5 7 9 L9 8 C8.5 10 6 12.5 2 13.5z" fill="#e8e8f0" stroke="#333" stroke-width="0.9"/>
<path d="M9 8.3 L14 2.5" stroke="#111" stroke-width="1.8"/>
<path d="M2 13.8 L4 13" stroke="#6a6aa8" stroke-width="1"/>
</svg>
<div style="position:absolute;left:591px;top:133px;width:34px;height:27px;background:#000;"></div>
<div style="position:absolute;left:592px;top:134px;width:32px;height:25px;background:#b2b4bf;"></div>
<div style="position:absolute;left:593px;top:135px;width:30px;height:23px;background:#000;"></div>
<svg style="left:594px;top:136px" width="28" height="21" shape-rendering="crispEdges"><rect width="28" height="21" fill="#fff"/><path fill="#cbcbcf" d="M3 0h4v3h-4zM11 0h4v3h-4zM19 0h4v3h-4zM27 0h1v3h-1zM0 3h3v4h-3zM7 3h4v4h-4zM15 3h4v4h-4zM23 3h4v4h-4zM3 7h4v4h-4zM11 7h4v4h-4zM19 7h4v4h-4zM27 7h1v4h-1zM0 11h3v4h-3zM7 11h4v4h-4zM15 11h4v4h-4zM23 11h4v4h-4zM3 15h4v4h-4zM11 15h4v4h-4zM19 15h4v4h-4zM27 15h1v4h-1zM0 19h3v2h-3zM7 19h4v2h-4zM15 19h4v2h-4zM23 19h4v2h-4z"/></svg>
<svg style="left:593px;top:135px" width="30" height="23"><circle cx="13.1" cy="9.2" r="4.6" fill="#f00"/></svg>
<div style="position:absolute;left:592px;top:164px;width:32px;height:25px;background:#000;"></div>
<svg style="left:593px;top:165px" width="30" height="23" shape-rendering="crispEdges"><rect width="30" height="23" fill="#fff"/><path fill="#cbcbcf" d="M4 0h4v4h-4zM12 0h4v4h-4zM20 0h4v4h-4zM28 0h2v4h-2zM0 4h4v4h-4zM8 4h4v4h-4zM16 4h4v4h-4zM24 4h4v4h-4zM4 8h4v4h-4zM12 8h4v4h-4zM20 8h4v4h-4zM28 8h2v4h-2zM0 12h4v4h-4zM8 12h4v4h-4zM16 12h4v4h-4zM24 12h4v4h-4zM4 16h4v4h-4zM12 16h4v4h-4zM20 16h4v4h-4zM28 16h2v4h-2zM0 20h4v3h-4zM8 20h4v3h-4zM16 20h4v3h-4zM24 20h4v3h-4z"/></svg>
<svg style="left:593px;top:165px" width="30" height="23"><circle cx="6.6" cy="8.7" r="4.5" fill="#000"/></svg>
<div style="position:absolute;left:592px;top:194px;width:32px;height:25px;background:#000;"></div>
<div style="position:absolute;left:593px;top:195px;width:30px;height:23px;background:#fff;"></div>
<div class="t" style="left:628px;top:141px;font-size:10px;line-height:10px;font-weight:bold;letter-spacing:0.9px;">red</div>
<div class="t" style="left:627px;top:171px;font-size:10px;line-height:10px;letter-spacing:-0.2px;">black</div>
<div class="t" style="left:629px;top:201px;font-size:10px;line-height:10px;font-style:italic;letter-spacing:-0.05px;">Background</div>
<svg style="left:789px;top:200px" width="11" height="12">
<path d="M2.8 5 V3.8 a2.7 2.7 0 0 1 5.4 0 V5" stroke="#333" stroke-width="1.2" fill="none"/>
<rect x="1.5" y="5.5" width="8" height="5" fill="#e8e8e8" stroke="#333"/>
<rect x="2" y="8" width="7" height="2" fill="#aaa"/>
</svg>
<div style="position:absolute;left:802px;top:132px;width:15px;height:386px;background:#fafafa;"></div>
<div style="position:absolute;left:803px;top:133px;width:13px;height:15px;background:#eeeee6;border:1px solid #e0e0d8;border-radius:2px;"></div>
<svg style="left:803px;top:133px" width="13" height="15"><path d="M3 9 L6.5 5.5 L10 9" stroke="#c4c4bc" stroke-width="2" fill="none"/></svg>
<div style="position:absolute;left:804px;top:502px;width:12px;height:16px;background:#eeeee6;border:1px solid #e4e4dc;border-radius:2px;"></div>
<svg style="left:804px;top:502px" width="12" height="16"><path d="M2.5 6 L6 9.5 L9.5 6" stroke="#c4c4bc" stroke-width="2.2" fill="none"/></svg>
<div style="position:absolute;left:545px;top:518px;width:272px;height:1px;background:#000;"></div>
<div style="position:absolute;left:545px;top:519px;width:272px;height:14px;background:#e0dfe3;"></div>
<div style="position:absolute;left:802px;top:519px;width:1px;height:14px;background:#000;"></div>
<div style="position:absolute;left:544px;top:533px;width:274px;height:1px;background:#c8c8d8;"></div>
<div style="position:absolute;left:543px;top:534px;width:276px;height:1px;background:#ffffff;"></div>
<div style="position:absolute;left:542px;top:535px;width:278px;height:1px;background:#70708c;"></div>
<div style="position:absolute;left:545px;top:519px;width:257px;height:1px;background:#ffffff;"></div>
<svg style="left:636px;top:519px" width="170" height="14">
<circle cx="9.3" cy="6.8" r="5.6" fill="#2a2a36"/><path d="M6.5 11.5 Q8 11 9 8 L10.5 4.5 Q11.5 3 13 3.5 M7.5 6.5 H11.5" stroke="#fff" stroke-width="1.3" fill="none"/>
<path d="M17 11 h4 l-2 2z" fill="#000"/>
<rect x="30" y="1" width="14" height="12" fill="#a8a8b0"/><path d="M30.5 12.5 V1.5 H43.5" stroke="#c8c8d0" fill="none"/><path d="M30 12.5 H43.5 V1" stroke="#111" fill="none"/><circle cx="37" cy="7" r="3.6" fill="#fff" stroke="#444" stroke-width="1.2"/>
<defs><linearGradient id="fg" x1="0" y1="0" x2="0" y2="1"><stop offset="0" stop-color="#f4f4f6"/><stop offset="1" stop-color="#c4c4cc"/></linearGradient></defs>
<path d="M59 3 h4 l1 1.5 h6 v6.5 h-11z" fill="url(#fg)" stroke="#9a9aa4" stroke-width="0.6"/><path d="M59 11.5 h11.5 V4.5" stroke="#111" stroke-width="1.2" fill="none"/>
<circle cx="94.3" cy="7" r="5.3" fill="#fff" stroke="#6a6a78" stroke-width="1.2"/><path d="M90.6 10.7 A5.3 5.3 0 0 1 98 3.3 Z" fill="#111"/>
<path d="M101 11 h4 l-2 2z" fill="#000"/>
<rect x="120" y="2" width="10" height="10" fill="#fff" stroke="#555" stroke-width="0.8"/><rect x="121.5" y="6.5" width="3.5" height="3.5" fill="#a0a0a8" stroke="#222" stroke-width="0.8"/><path d="M130.5 2.5 v10 h-10" stroke="#111" stroke-width="1.4" fill="none"/>
<path d="M149.5 5.5 h8 l-0.8 7 h-6.4z" fill="#c8c8cc" stroke="#222" stroke-width="1"/><path d="M147.8 4.5 Q153.5 2.5 159.2 4.5" stroke="#222" stroke-width="1.4" fill="none"/><rect x="151.5" y="1.5" width="4" height="2" fill="#ddd" stroke="#333" stroke-width="0.8"/><path d="M152 6.5 v5 M155 6.5 v5" stroke="#444" stroke-width="0.9"/>
</svg>
<svg style="left:803px;top:519px" width="15" height="15"><rect x="12" y="4" width="2" height="2" fill="#b8b8c8"/><rect x="12" y="4" width="1" height="1" fill="#f0a060"/><rect x="13" y="5" width="1" height="1" fill="#fff"/><rect x="8" y="8" width="2" height="2" fill="#b8b8c8"/><rect x="8" y="8" width="1" height="1" fill="#f0a060"/><rect x="9" y="9" width="1" height="1" fill="#fff"/><rect x="12" y="8" width="2" height="2" fill="#b8b8c8"/><rect x="12" y="8" width="1" height="1" fill="#f0a060"/><rect x="13" y="9" width="1" height="1" fill="#fff"/><rect x="4" y="12" width="2" height="2" fill="#b8b8c8"/><rect x="4" y="12" width="1" height="1" fill="#f0a060"/><rect x="5" y="13" width="1" height="1" fill="#fff"/><rect x="8" y="12" width="2" height="2" fill="#b8b8c8"/><rect x="8" y="12" width="1" height="1" fill="#f0a060"/><rect x="9" y="13" width="1" height="1" fill="#fff"/><rect x="12" y="12" width="2" height="2" fill="#b8b8c8"/><rect x="12" y="12" width="1" height="1" fill="#f0a060"/><rect x="13" y="13" width="1" height="1" fill="#fff"/></svg>
</body></html>
